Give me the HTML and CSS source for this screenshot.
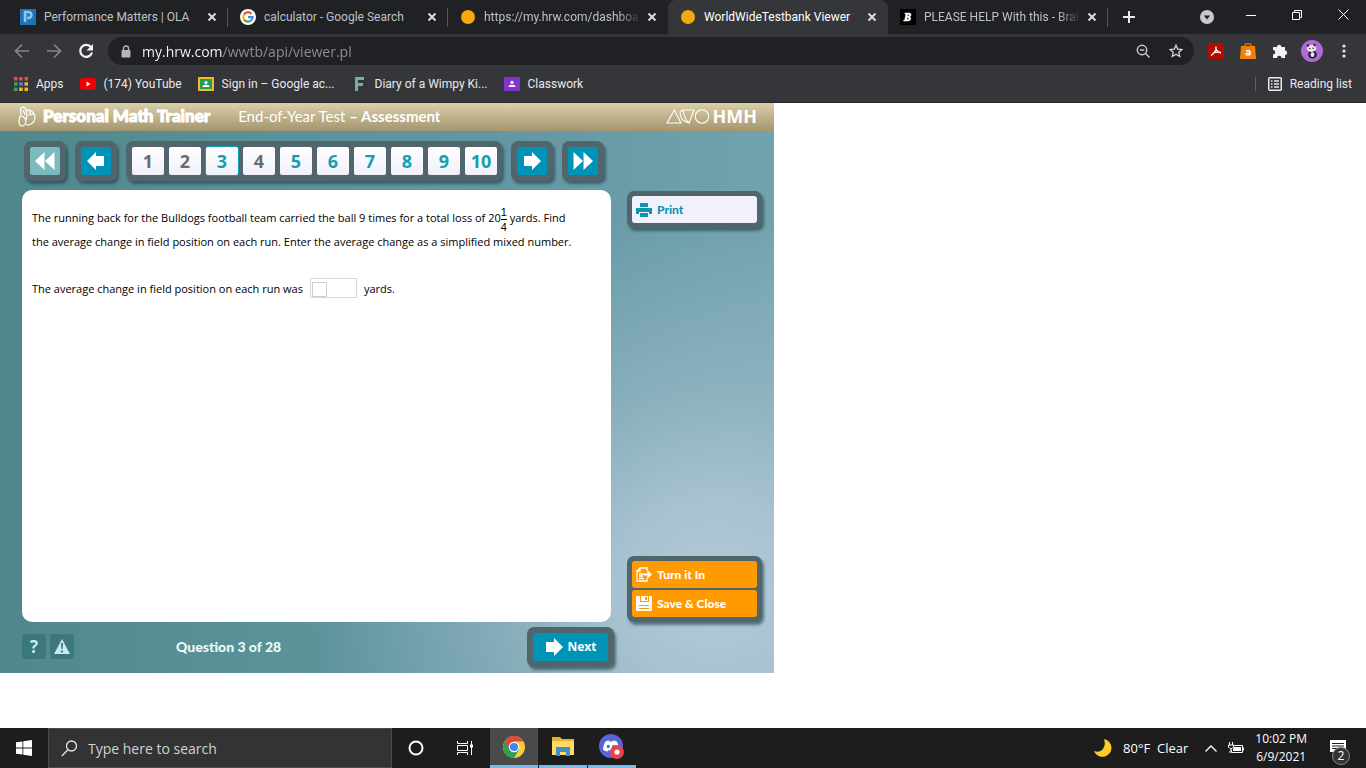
FILE: index.html
```html
<!DOCTYPE html>
<html lang="en">
<head>
<meta charset="utf-8">
<title>WorldWideTestbank Viewer</title>
<link rel="stylesheet" href="styles.css">
</head>
<body>
<header class="browser">
  <div class="tabstrip">
    <nav class="tabs" aria-label="Tabs">
      <div class="tab">
        <svg class="icon16" viewBox="0 0 16 16"><rect width="16" height="16" fill="#1b76b8"/><path d="M5 13V3h3.500a2.700 2.700 0 0 1 0 6H7" fill="none" stroke="#8fc6ee" stroke-width="2.500"/><path d="M7 5v5" stroke="#5ca5d8"/></svg>
        <a class="tab-title" href="#">Performance Matters | OLA</a>
        <button class="close" aria-label="Close tab"><svg viewBox="0 0 8 8"><path d="M.5.5l7 7M7.500.5l-7 7"/></svg></button>
      </div>
      <div class="tab">
        <svg class="icon16" viewBox="0 0 16 16"><circle cx="8" cy="8" r="8" fill="#fff"/><g fill="none" stroke-width="2.200"><path d="M11.500 4.800A4.700 4.700 0 0 0 4 5.500" stroke="#ea4335"/><path d="M4 5.500a4.700 4.700 0 0 0 0 5" stroke="#fbbc05"/><path d="M4 10.500a4.700 4.700 0 0 0 7 1" stroke="#34a853"/><path d="M11 11.500a4.700 4.700 0 0 0 1.600-3.300H8" stroke="#4285f4"/></g></svg>
        <a class="tab-title" href="#">calculator - Google Search</a>
        <button class="close" aria-label="Close tab"><svg viewBox="0 0 8 8"><path d="M.5.5l7 7M7.500.5l-7 7"/></svg></button>
      </div>
      <div class="tab no-line">
        <svg class="icon16" viewBox="0 0 16 16"><circle cx="8" cy="8" r="7" fill="#f5a810"/></svg>
        <a class="tab-title fade" href="#">https://my.hrw.com/dashboa</a>
        <button class="close" aria-label="Close tab"><svg viewBox="0 0 8 8"><path d="M.5.5l7 7M7.500.5l-7 7"/></svg></button>
      </div>
      <div class="tab active">
        <svg class="icon16" viewBox="0 0 16 16"><circle cx="8" cy="8" r="7" fill="#f5a810"/></svg>
        <a class="tab-title" href="#" aria-current="page">WorldWideTestbank Viewer</a>
        <button class="close" aria-label="Close tab"><svg viewBox="0 0 8 8"><path d="M.5.5l7 7M7.500.5l-7 7"/></svg></button>
      </div>
      <div class="tab">
        <svg class="icon16" viewBox="0 0 16 16"><rect width="16" height="16" fill="#000"/><path d="M5 4h4.500q2 .3 1.500 2.200-.3 1.300-1.300 1.700 1.500.5 1 2.300Q10.200 12 8 12H3.500l.3-1h1l1-6H4.800zM7.800 5.300l-.3 2q1.800 0 1.800-1t-1.500-1zM7.200 8.600l-.4 2.200q2 .1 2-1.200 0-1-1.600-1z" fill="#fff" stroke="#fff" stroke-width=".5" fill-rule="evenodd"/></svg>
        <a class="tab-title fade" href="#">PLEASE HELP With this - Brain</a>
        <button class="close" aria-label="Close tab"><svg viewBox="0 0 8 8"><path d="M.5.5l7 7M7.500.5l-7 7"/></svg></button>
      </div>
    </nav>
    <button class="new-tab" aria-label="New tab"><svg width="12" height="12" viewBox="0 0 12 12"><path d="M6 0v12M0 6h12" stroke="#e8eaed" stroke-width="2"/></svg></button>
    <div class="window-buttons">
      <button aria-label="Search tabs"><svg width="14" height="14" viewBox="0 0 14 14"><circle cx="7" cy="7" r="7" fill="#c8cacd"/><path d="M3.800 5.500h6.400L7 9.500z" fill="#202124"/></svg></button>
      <button aria-label="Minimize"><svg width="10" height="10" viewBox="0 0 10 10"><path d="M0 5.500h10" stroke="#fff"/></svg></button>
      <button aria-label="Restore"><svg width="10" height="10" viewBox="0 0 10 10" fill="none" stroke="#fff"><path d="M.5 2.500h7v7h-7zM2.500 2.500v-2h7v7h-2"/></svg></button>
      <button aria-label="Close window"><svg width="11" height="11" viewBox="0 0 11 11"><path d="M.5.5l10 10M10.500.5l-10 10" stroke="#fff"/></svg></button>
    </div>
  </div>

  <div class="toolbar">
    <div class="history">
      <button aria-label="Back"><svg width="16" height="16" viewBox="0 0 16 16" fill="none" stroke="#85878b" stroke-width="1.700"><path d="M15 8H2M8 1.500L1.500 8 8 14.500"/></svg></button>
      <button aria-label="Forward"><svg width="16" height="16" viewBox="0 0 16 16" fill="none" stroke="#85878b" stroke-width="1.700"><path d="M1 8h13M8 1.500L14.500 8 8 14.500"/></svg></button>
      <button aria-label="Reload"><svg width="16" height="16" viewBox="0 0 16 16"><path d="M13 4.200A6 6 0 1 0 14 9.500" fill="none" stroke="#f1f3f4" stroke-width="2.200"/><path d="M15 1v6.500H8.500z" fill="#f1f3f4"/></svg></button>
    </div>
    <div class="omnibox">
      <svg width="10" height="13" viewBox="0 0 10 13"><path d="M2.500 6V3.500a2.500 2.500 0 0 1 5 0V6" fill="none" stroke="#b4b6b9" stroke-width="1.400"/><rect x="0.500" y="5" width="9" height="7.500" rx="1" fill="#b4b6b9"/></svg>
      <input class="url" type="text" aria-label="Address" value="my.hrw.com/wwtb/api/viewer.pl">
      <button aria-label="Zoom"><svg width="15" height="15" viewBox="0 0 15 15" fill="none" stroke="#c4c6c9" stroke-width="1.500"><circle cx="6" cy="6" r="4.700"/><path d="M3.800 6h4.400M9.500 9.500l4 4"/></svg></button>
      <button aria-label="Bookmark this page"><svg width="14" height="14" viewBox="0 0 14 14" fill="none" stroke="#d4d6d9" stroke-width="1.300"><path d="M7 1.200l1.700 3.900 4.300.4-3.200 2.800.9 4.200L7 10.300l-3.700 2.200.9-4.200L1 5.500l4.300-.4z"/></svg></button>
    </div>
    <div class="extensions">
      <button aria-label="Adobe Acrobat"><svg width="16" height="16" viewBox="0 0 16 16"><rect width="16" height="16" rx="2" fill="#b30b00"/><path d="M8 3.500C8.300 7 6 10.500 3 12.500M8 3.500C7 6 9.500 9.500 13 10M5 10.200C7.500 9 10 8.800 13 9.500" fill="none" stroke="#fff" stroke-width="1.300"/></svg></button>
      <button aria-label="Shopping assistant"><svg width="16" height="16" viewBox="0 0 16 16"><path d="M5 4V2q3-3 6 0v2" fill="none" stroke="#d66d09" stroke-width="1.500"/><path d="M1 3h14l1 13H0z" fill="#f58008"/><path d="M6 8q4-1.500 4 1.200V12.500M10 10q-4-.4-4 1.200 1 2 4-.4" fill="none" stroke="#fff" stroke-width="1.400"/></svg></button>
      <button aria-label="Extensions"><svg width="16" height="16" viewBox="0 0 16 16"><path d="M1 4h4a2.200 2.200 0 1 1 4.400 0H13v3.500a2.200 2.200 0 1 1 0 4.400V15H9.600a2.300 2.300 0 0 0-4.600 0H1v-3.600a2.200 2.200 0 0 0 0-4.400z" fill="#f1f3f4"/></svg></button>
      <button aria-label="Profile"><svg width="22" height="22" viewBox="0 0 22 22"><circle cx="11" cy="11" r="11" fill="#b069d8"/><ellipse cx="11.500" cy="14.500" rx="4.300" ry="4" fill="#241e2b"/><ellipse cx="11.500" cy="14.500" rx="2" ry="2.500" fill="#e7e2ea"/><ellipse cx="10.500" cy="8.300" rx="4.600" ry="3.600" fill="#eee"/><circle cx="7" cy="5.500" r="1.200" fill="#292030"/><circle cx="13.500" cy="5" r="1.200" fill="#292030"/><circle cx="8.800" cy="8.500" r=".8" fill="#292030"/><circle cx="12.200" cy="8.300" r=".8" fill="#292030"/></svg></button>
      <button aria-label="Menu"><svg width="4" height="14" viewBox="0 0 4 14" fill="#e8eaed"><circle cx="2" cy="2" r="1.600"/><circle cx="2" cy="7" r="1.600"/><circle cx="2" cy="12" r="1.600"/></svg></button>
    </div>
  </div>

  <nav class="bookmarks" aria-label="Bookmarks">
    <a href="#"><svg width="14" height="14" viewBox="0 0 14 14"><path d="M0 0h3.500v3.500H0zM5.200 0h3.500v3.500H5.200zM10.500 0H14v3.500h-3.500z" fill="#e05246"/><path d="M0 5.200h3.500v3.500H0z" fill="#35a853"/><path d="M5.200 5.200h3.500v3.500H5.200z" fill="#4285f4"/><path d="M10.500 5.200H14v3.500h-3.500z" fill="#f0b72c"/><path d="M0 10.500h3.500V14H0z" fill="#35a853"/><path d="M5.200 10.500h3.500V14H5.200zM10.500 10.500H14V14h-3.500z" fill="#f0b72c"/></svg>Apps</a>
    <a href="#"><svg width="16" height="12" viewBox="0 0 16 12"><rect width="16" height="12" rx="3" fill="#f00000"/><path d="M6.500 3.500v5l4-2.500z" fill="#fff"/></svg>(174) YouTube</a>
    <a href="#"><svg width="16" height="14" viewBox="0 0 16 14"><rect width="16" height="14" rx="1" fill="#f2bd25"/><rect x="2" y="2" width="12" height="10" fill="#259b58"/><circle cx="8" cy="5.500" r="1.600" fill="#fff"/><path d="M4.500 10q0-2.300 3.500-2.300t3.500 2.300z" fill="#fff"/></svg>Sign in – Google ac...</a>
    <a href="#"><svg width="16" height="14" viewBox="0 0 16 14"><path d="M4 0h9v3H7v3h5v3H7v5H4z" fill="#79aba9"/></svg>Diary of a Wimpy Ki...</a>
    <a href="#"><svg width="16" height="14" viewBox="0 0 16 14"><rect width="16" height="14" rx="1" fill="#8133cc"/><circle cx="8" cy="5.300" r="1.600" fill="#fff"/><path d="M4.500 10q0-2.300 3.500-2.300t3.500 2.300z" fill="#fff"/></svg>Classwork</a>
    <a class="reading" href="#"><svg width="14" height="14" viewBox="0 0 14 14" fill="none" stroke="#e8eaed" stroke-width="1.500"><rect x="0.750" y="0.750" width="12.500" height="12.500" rx="1"/><path d="M3 4h1.500M3 7h1.500M3 10h1.500M6 4h5M6 7h5M6 10h5"/></svg>Reading list</a>
  </nav>
</header>

<main class="page">
  <section class="viewer">
    <header class="brandbar">
      <svg width="18" height="21" viewBox="0 0 18 21" fill="none" stroke="#fff" stroke-width="1.200"><path d="M2 10q5 0 6 5-1 5-4 5T1 15zM3 9L2.500 2.500 5 1l2.500 1.500L9 9l-1 5M5 4l2 5M8 4q6-1 9 6 0 6-4 8t-5 0M10 9l6-1M11 5l2 4"/></svg>
      <h1 class="brand">Personal Math Trainer</h1>
      <p class="test-name">End-of-Year Test <b>– Assessment</b></p>
      <div class="hmh"><svg width="44" height="15" viewBox="0 0 44 15" fill="none" stroke="#fff" stroke-width="1.100"><path d="M1 14L8.500 1 15 14zM28 1L23 14Q14 12 14 3q1-2 4-2zM17 1q1 8 6 13"/><circle cx="36" cy="7.500" r="6.700"/></svg><b>HMH</b></div>
    </header>

    <div class="workspace">
      <nav class="question-nav" aria-label="Questions">
        <div class="frame"><button class="step dim" aria-label="First"><svg width="20" height="18" viewBox="0 0 20 18"><path d="M9.500 0v18L0 9zM19.500 0v18L10 9z"/></svg></button></div>
        <div class="frame"><button class="step" aria-label="Previous"><svg width="18" height="18" viewBox="0 0 18 18"><path d="M9 0v4h8v10H9v4L0 9z"/></svg></button></div>
        <div class="frame numbers">
          <button class="seen">1</button><button class="seen">2</button><button class="current" aria-current="step">3</button><button class="seen">4</button><button>5</button><button>6</button><button>7</button><button>8</button><button>9</button><button>10</button>
        </div>
        <div class="frame"><button class="step" aria-label="Next question"><svg width="18" height="18" viewBox="0 0 18 18"><path d="M9 0v4H1v10h8v4l9-9z"/></svg></button></div>
        <div class="frame"><button class="step" aria-label="Last"><svg width="20" height="18" viewBox="0 0 20 18"><path d="M.5 0v18L10 9zM10.500 0v18L20 9z"/></svg></button></div>
      </nav>

      <article class="question">
        <p>The running back for the Bulldogs football team carried the ball 9 times for a total loss of 20<span class="fraction"><span>1</span><span class="den">4</span></span> yards. Find<br>the average change in field position on each run. Enter the average change as a simplified mixed number.</p>
        <p class="answer"><label for="answer">The average change in field position on each run was</label><span class="answer-box"><input id="answer" type="text"></span><span>yards.</span></p>
      </article>

      <aside class="side">
        <div class="frame"><button class="action print"><svg width="16" height="14" viewBox="0 0 16 14"><path d="M4 0h8v4H4zM0 5h16v6h-3V9H3v2H0zM4 10h8v4H4z" fill="#0e95b0"/></svg>Print</button></div>
        <div class="frame stack">
          <button class="action"><svg width="16" height="15" viewBox="0 0 16 15" fill="none" stroke="#fff" stroke-width="1.300"><path d="M11 4V1H4L1 4v10h10v-3M4 1v3H1M3 7h5M3 9h4M3 11.500h5"/><path d="M8 7.500h6M11.500 4.500l3 3-3 3" stroke-width="2"/></svg>Turn it In</button>
          <button class="action"><svg width="16" height="15" viewBox="0 0 16 15"><path d="M0 0h16v15H0z" fill="#fff"/><path d="M4 0h1v5h7V0h1v6H4zM3 9h10v1H3zM3 12h10v1H3z" fill="#ff9a00"/><path d="M9 1h2v3H9z" fill="#ff9a00"/></svg>Save &amp; Close</button>
        </div>
      </aside>

      <footer class="status">
        <button class="tool" aria-label="Help">?</button>
        <button class="tool" aria-label="Report a problem"><svg width="16" height="15" viewBox="0 0 16 15"><path d="M8 0l8 15H0z" fill="#c8e9ef"/><path d="M7 4h2l-.4 6H7.400zM7 11.500h2v2H7z" fill="#3c777b"/></svg></button>
        <strong class="progress">Question 3 of 28</strong>
        <div class="frame"><button class="step next"><svg width="18" height="18" viewBox="0 0 18 18"><path d="M9 0v4H1v10h8v4l9-9z"/></svg>Next</button></div>
      </footer>
    </div>
  </section>
</main>

<footer class="taskbar">
  <button class="start" aria-label="Start"><svg width="16" height="16" viewBox="0 0 16 16"><path d="M0 2.300l6.500-.9v6.200H0zM7.300 1.300L16 0v7.600H7.300zM0 8.400h6.500v6.200L0 13.700zM7.300 8.400H16V16l-8.700-1.300z" fill="#fff"/></svg></button>
  <label class="search"><svg width="17" height="17" viewBox="0 0 17 17" fill="none" stroke="#e6e6e6" stroke-width="1.300"><circle cx="10.500" cy="6" r="5"/><path d="M7 9.800L.8 16"/></svg><input type="text" placeholder="Type here to search" aria-label="Type here to search"></label>
  <div class="apps">
    <button aria-label="Cortana"><svg width="16" height="16" viewBox="0 0 16 16"><circle cx="8" cy="8" r="6.500" fill="none" stroke="#fff" stroke-width="2"/></svg></button>
    <button aria-label="Task view"><svg width="16" height="16" viewBox="0 0 16 16" fill="none" stroke="#fff"><path d="M.5 1v2.500h10V1M.5 15v-2.500h10V15M.5 5.500h10v5H.5zM14.500 1v14"/><path d="M13 4.500h3v3h-3z" fill="#fff" stroke="none"/></svg></button>
    <button class="open focused" aria-label="Google Chrome"><svg width="22" height="22" viewBox="0 0 22 22"><circle cx="11" cy="11" r="11" fill="#f9ce36"/><path d="M1.500 5.500A11 11 0 0 0 11 22l5-8.500-5-2.500z" fill="#2da14f"/><path d="M1.500 5.500L6.500 13 11 5.500h9.500A11 11 0 0 0 1.500 5.500" fill="#df493b"/><circle cx="11" cy="11" r="5.200" fill="#fff"/><circle cx="11" cy="11" r="4.100" fill="#4285f4"/></svg></button>
    <button class="open" aria-label="File Explorer"><svg width="22" height="19" viewBox="0 0 22 19"><path d="M0 0h8l2 2h12v16H0z" fill="#e7b12c"/><path d="M1 4h21v14H0V5z" fill="#ffda68"/><path d="M4 10h14v9h-4v-4H8v4H4z" fill="#3c91c9"/></svg></button>
    <button class="open" aria-label="Discord"><svg width="26" height="26" viewBox="0 0 26 26"><circle cx="12" cy="12" r="12" fill="#5865d8"/><path d="M6.500 7.500Q9 6 10 6.500l.5 1h3l.5-1q2 0 4 1.200Q20 11.500 20 15.500 18 17.500 15.500 17.500l-.8-1.300H9.300l-.8 1.300Q6 17.500 4 15.500q0-4.500 2.500-8z" fill="#fff"/><ellipse cx="9.300" cy="12.500" rx="1.600" ry="1.800" fill="#5865d8"/><ellipse cx="14.700" cy="12.500" rx="1.600" ry="1.800" fill="#5865d8"/><circle cx="18" cy="18" r="7" fill="#e9414b"/><circle cx="18" cy="18" r="2.600" fill="#fff"/></svg></button>
  </div>
  <div class="tray">
    <button class="weather"><svg width="18" height="18" viewBox="0 0 18 18"><path d="M10 0a9 9 0 1 1-10 12Q6 14 9 10T10 0z" fill="#ffc928"/></svg>80°F&nbsp; Clear</button>
    <button class="more" aria-label="Show hidden icons"><svg width="12" height="7" viewBox="0 0 12 7" fill="none" stroke="#fff" stroke-width="1.300"><path d="M.5 6.500L6 1l5.500 5.500"/></svg></button>
    <button aria-label="Battery"><svg width="16" height="12" viewBox="0 0 16 12" fill="none" stroke="#fff"><path d="M6 3.500h8.500v7H3.500V8M1.500 0v3M4.500 0v3M.5 3h5v2L4 6.500H2L.5 5zM3 6v4H1"/><path d="M6 5h7v4H5V7z" fill="#fff" stroke="none"/><path d="M15.500 5.500v3"/></svg></button>
    <button class="clock"><span>10:02 PM</span><span>6/9/2021</span></button>
    <button class="notices" aria-label="Notifications, 2 new"><svg width="17" height="17" viewBox="0 0 17 17"><path d="M0 0h16v12H8l-3 4v-4H0z" fill="#fff"/><path d="M2 3.500h12M2 6h12M2 8.500h12" stroke="#1d1d1d"/></svg><span class="badge">2</span></button>
  </div>
</footer>
</body>
</html>
```
FILE: styles.css
```css
* { box-sizing: border-box; }
body {
  margin: 0;
  min-height: 100vh;
  display: flex;
  flex-direction: column;
  background: #fff;
  font-family: "Open Sans", "Noto Sans", sans-serif;
  font-size: 12px;
}
button { border: 0; padding: 0; background: none; color: inherit; font: inherit; display: flex; align-items: center; justify-content: center; }
input { font: inherit; min-width: 0; }
a { color: inherit; text-decoration: none; }
p, h1 { margin: 0; }
svg { display: block; flex: none; }

/* Browser chrome */
.browser { background: #35363a; color: #e8eaed; border-bottom: 1px solid #29292b; font-family: Roboto, sans-serif; }
.tabstrip { display: flex; height: 34px; background: #202124; padding-left: 8px; }
.tabs { display: flex; flex: 0 1 1100px; min-width: 0; }
.tab { flex: 1 1 0; min-width: 0; display: flex; align-items: center; padding: 0 8px 0 12px; position: relative; color: #bdc1c6; }
.tab::after { content: ""; position: absolute; right: 0; top: 8px; width: 1px; height: 19px; background: #55575b; }
.tab.no-line::after, .tab.active::after { display: none; }
.tab.active { background: #35363a; color: #fff; border-radius: 8px 8px 0 0; }
.icon16 { width: 16px; height: 16px; margin-right: 8px; }
.tab-title { flex: 1; overflow: hidden; white-space: nowrap; }
.tab-title.fade { mask-image: linear-gradient(to right, #000 85%, transparent); }
.close { width: 16px; height: 16px; margin-left: 3px; }
.close svg { width: 8px; height: 8px; overflow: visible; stroke: #dadce0; stroke-width: 2; }
.new-tab { width: 28px; margin-left: 7px; }
.window-buttons { margin-left: auto; display: flex; align-items: flex-start; }
.window-buttons button { width: 46px; height: 29px; }
.window-buttons button:first-child { height: 34px; width: 42px; }

.toolbar { display: flex; align-items: center; height: 36px; padding: 2px 14px 4px 14px; }
.history { display: flex; gap: 16px; margin-right: 14px; }
.omnibox { flex: 1; height: 28px; border-radius: 14px; background: #202124; display: flex; align-items: center; gap: 18px; padding: 0 11px 0 13px; }
.url {
  flex: 1; margin-left: -7px; padding: 0; border: 0; color: #fff;
  font-family: "Open Sans", sans-serif; font-size: 14px;
  background: linear-gradient(to right, #fff 81px, #8f9296 81px);
  background-clip: text;
  -webkit-text-fill-color: transparent;
}
.extensions { display: flex; align-items: center; gap: 16px; margin-left: 14px; }
.extensions button:last-child { width: 16px; }
.extensions button:nth-child(4) { margin: 0 -3px; }

.bookmarks { display: flex; align-items: center; height: 32px; padding: 0 14px 4px; gap: 16px; white-space: nowrap; }
.bookmarks a { display: flex; align-items: center; gap: 8px; }
.bookmarks .reading { margin-left: auto; padding-left: 12px; border-left: 1px solid #5d5f63; }

/* Test viewer */
.page { flex: 1; padding-bottom: 55px; display: flex; }
.viewer {
  width: 100%;
  max-width: 774px;
  display: flex;
  flex-direction: column;
  background:
    radial-gradient(ellipse 400px 380px at 92% 86%, #b5cad9 0%, rgba(181, 202, 217, 0.8) 25%, rgba(181, 202, 217, 0.4) 55%, rgba(181, 202, 217, 0) 100%),
    linear-gradient(to right, #50878c 0%, #5a9299 35%, #6397a3 65%, #72a2af 100%);
}
.brandbar {
  display: flex; align-items: center; height: 28px; padding: 0 17px 2px 18px; color: #fff;
  background: linear-gradient(#dad0a9, #a4956f);
}
.brand { margin-left: 7px; font: 900 17px/20px Lato, sans-serif; -webkit-text-stroke: 1px #fff; }
.test-name { margin-left: 28px; font-family: Lato, sans-serif; font-size: 15px; }
.hmh { margin-left: auto; display: flex; align-items: center; gap: 2px; font-size: 18px; }

.workspace {
  flex: 1;
  display: grid;
  grid-template-columns: minmax(0, 589fr) minmax(0, 135fr);
  grid-template-rows: 59px 1fr 51px;
  column-gap: 16px;
  padding: 0 12px 0 22px;
}
.frame { background: #50666c; border-radius: 7px; padding: 6px; box-shadow: 2px 3px 3px rgba(30, 60, 70, 0.6); }
.question-nav { grid-column: 1; display: flex; align-items: center; gap: 9px; padding-left: 2px; }
.frame.numbers { display: flex; gap: 5px; padding: 6px 5px 6px 6px; }
.numbers button {
  width: 32px; height: 28px; border-radius: 2px;
  background: linear-gradient(#fff, #f0f0fa); color: #159fae; font-size: 18px; font-weight: 700;
}
.numbers .seen { color: #6a6c6e; }
.numbers .current { box-shadow: 0 0 0 1px #10a0b4; }
.step { width: 30px; height: 28px; background: #0093b8; color: #fff; font-weight: 700; border-radius: 2px; }
.step.dim { background: #7bbabf; }
.step svg { fill: #fff; }

.question {
  grid-column: 1; background: #fff; border-radius: 10px; padding: 16px 10px; color: #000;
  font-size: 11px; font-weight: 500; line-height: 23px;
}
.fraction { display: inline-flex; flex-direction: column; vertical-align: middle; line-height: 14px; margin: -4px 0; font-family: "Liberation Sans", sans-serif; }
.fraction .den { border-top: 1px solid #000; }
.answer { display: flex; align-items: center; gap: 7px; margin-top: 24px; }
.answer-box { width: 47px; height: 20px; border: 1px solid #d9d9d9; display: flex; align-items: flex-end; padding-left: 1px; }
.answer-box input { width: 15px; height: 15px; border: 1px solid #cfcfcf; padding: 0; }

.side { display: flex; flex-direction: column; justify-content: space-between; padding-top: 1px; }
.side .frame { padding: 5px; }
.action {
  width: 100%; height: 27px; justify-content: flex-start; gap: 5px; padding-left: 4px; border-radius: 3px;
  background: #ff9a00; color: #fff; font: 900 12px/16px Lato, sans-serif;
}
.action.print { background: #f1f1fb; color: #0e95b0; }
.stack { display: grid; gap: 2px; }

.status { grid-column: 1; display: flex; align-items: center; padding-bottom: 2px; color: #eefaf5; }
.tool { width: 24px; height: 25px; border-radius: 3px; background: #3c777b; color: #c8e9ef; font-size: 17px; font-weight: 700; }
.tool + .tool { margin-left: 4px; }
.progress { margin-left: 102px; font: 900 14px/20px Lato, sans-serif; }
.status .frame { margin: 0 -3px 0 auto; }
.step.next { width: 75px; gap: 5px; }

/* Windows taskbar */
.taskbar { display: flex; height: 40px; background: #1d1d1d; color: #fff; }
.start { width: 48px; }
.search { flex: 0 1 344px; display: flex; align-items: center; gap: 10px; padding: 0 12px; background: #333; border: 1px solid #4d4d4d; }
.search input { flex: 1; border: 0; padding: 0; background: none; font-size: 14px; }
.search input::placeholder { color: #d2d2d2; opacity: 1; }
.apps { display: flex; gap: 1px; }
.apps button { width: 48px; }
.apps .open { border-bottom: 3px solid #76b9ed; }
.apps .focused { background: #4a4a4a; }
.tray { margin-left: auto; display: flex; gap: 11px; padding-right: 16px; }
.weather { gap: 11px; font-size: 13px; }
.more { margin-left: 6px; }
.clock { flex-direction: column; line-height: 18px; }
.notices { position: relative; width: 24px; margin-left: 8px; }
.badge {
  position: absolute; right: 0; bottom: 3px; width: 18px; height: 18px; border-radius: 9px;
  background: #333; border: 1px solid #888; font-size: 12px; line-height: 16px; text-align: center;
}
```
